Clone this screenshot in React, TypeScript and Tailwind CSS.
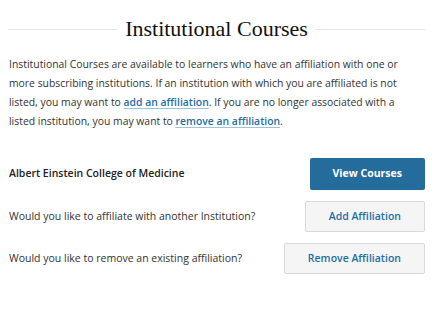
import React from 'react'

const rows = [
    { label: 'Would you like to affiliate with another Institution?', action: 'Add Affiliation' },
    { label: 'Would you like to remove an existing affiliation?', action: 'Remove Affiliation' },
]

const App: React.FC = () => {
    return (
        <div className="w-[437px] h-[309px] bg-white pl-[8px] pr-[12px] pt-[12px] font-['Open_Sans',sans-serif] text-[#333]">
            <div className="flex items-center gap-[8px]">
                <div className="flex-1 h-px bg-[#e3e3e3]" />
                <h1 className="font-['Liberation_Serif',serif] text-[22px] leading-[34px] text-[#111] font-normal">
                    Institutional Courses
                </h1>
                <div className="flex-1 h-px bg-[#e3e3e3]" />
            </div>

            <p className="mt-[9px] pl-[1px] pr-[10px] text-[10.4px] leading-[19px]">
                Institutional Courses are available to learners who have an affiliation with one or more
                subscribing institutions. If an institution with which you are affiliated is not listed, you may
                want to{' '}
                <a href="#" className="text-[#1f6ea3] font-semibold underline decoration-[#9cc4dd] underline-offset-2">
                    add an affiliation
                </a>
                . If you are no longer associated with a listed institution, you may want to{' '}
                <a href="#" className="text-[#1f6ea3] font-semibold underline decoration-[#9cc4dd] underline-offset-2">
                    remove an affiliation
                </a>
                .
            </p>

            <div className="mt-[27px] pl-[1px] flex flex-col gap-[11px]">
                <div className="flex items-center justify-between">
                    <span className="text-[10.5px] font-semibold text-[#222]">Albert Einstein College of Medicine</span>
                    <button className="h-[32px] px-[23px] rounded-[2px] bg-[#236c9b] text-white text-[10.5px] font-bold whitespace-nowrap">
                        View Courses
                    </button>
                </div>
                {rows.map((row) => (
                    <div key={row.action} className="flex items-center justify-between">
                        <span className="text-[10.5px]">{row.label}</span>
                        <button className="h-[31px] px-[23px] rounded-[2px] border border-[#d9d9d9] bg-[#f5f5f5] text-[#1f6ea3] text-[10.5px] font-semibold whitespace-nowrap">
                            {row.action}
                        </button>
                    </div>
                ))}
            </div>
        </div>
    )
}

export default App
